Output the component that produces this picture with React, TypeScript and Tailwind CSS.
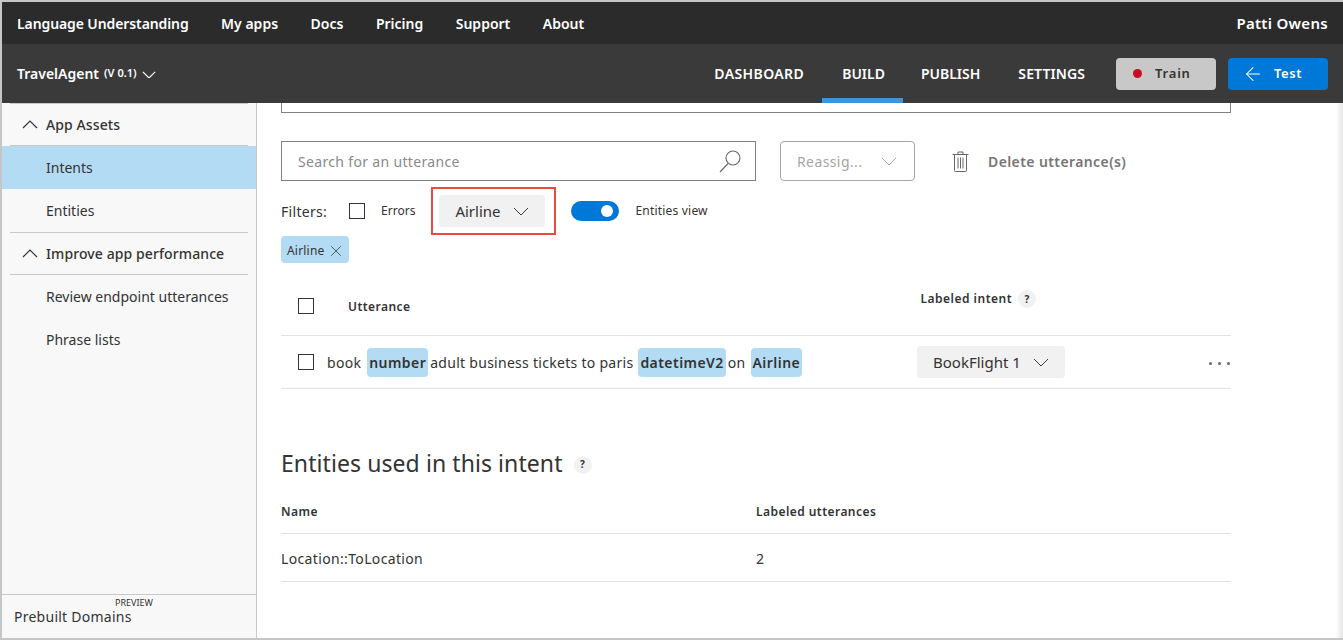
import { ArrowLeft, X } from 'lucide-react';

const topLinks = ['My apps', 'Docs', 'Pricing', 'Support', 'About'];

function Chevron({ className, up, size = 16, weight = 0.95 }: { className?: string; up?: boolean; size?: number; weight?: number }) {
  return (
    <svg width={size} height={(size * 9) / 16} viewBox="0 0 16 9" fill="none" stroke="currentColor" strokeWidth={weight} className={`shrink-0 ${className ?? ''}`}>
      <path d={up ? 'M1 8l7-7 7 7' : 'M1 1l7 7 7-7'} />
    </svg>
  );
}

function SearchIcon() {
  return (
    <svg viewBox="0 0 22 23" fill="none" stroke="#666666" strokeWidth="1.1" className="h-[23px] w-[22px] shrink-0">
      <circle cx="14" cy="8" r="7" />
      <path d="M9 13.5 1 22" />
    </svg>
  );
}

function TrashIcon() {
  return (
    <svg viewBox="0 0 17 21" fill="none" stroke="#666666" strokeWidth="1" className="h-[21px] w-[17px] shrink-0">
      <path d="M0.5 3.5h16M6 3.5V1h5v2.5M2.5 3.5v16.2c0 .5.3.8.8.8h10.4c.5 0 .8-.3.8-.8V3.5" />
      <path d="M6 6.5v11M8.5 6.5v11M11 6.5v11" />
    </svg>
  );
}

function Checkbox() {
  return <span className="block h-4 w-4 shrink-0 border border-[#333333]" />;
}

function Help() {
  return (
    <span className="flex h-[18px] w-[18px] shrink-0 items-center justify-center rounded-full bg-[#f1f1f1] text-[10px] font-bold text-[#333333]">
      ?
    </span>
  );
}

function Entity({ children }: { children: string }) {
  return (
    <span className="flex h-[29px] items-center rounded-sm bg-[#b3dbf3] px-[2px] font-semibold tracking-[0.45px] text-[#333333]">
      {children}
    </span>
  );
}

function SideItem({ label, active }: { label: string; active?: boolean }) {
  return (
    <div className={`flex h-[43px] items-center pl-[44px] text-[14px] ${active ? 'bg-[#b3dbf3]' : ''}`}>
      {label}
    </div>
  );
}

function SideHeader({ label }: { label: string }) {
  return (
    <div className="mx-2 flex h-[43px] items-center border-b border-t border-[#c8c8c8] pl-[12px] text-[14px] font-medium tracking-[0.1px]">
      <Chevron up weight={1.2} className="mr-[8px]" />
      {label}
    </div>
  );
}

export default function App() {
  return (
    <div
      className="flex h-[640px] w-[1343px] flex-col overflow-hidden border-b-2 border-l-2 border-t-2 border-[#c6c6c6] bg-white text-[#333333]"
      style={{ fontFamily: '"Noto Sans", "Open Sans", sans-serif' }}
    >
      {/* top nav */}
      <div className="flex h-[42px] shrink-0 items-center bg-[#2b2b2b] px-[15px] text-[14px] font-semibold text-white">
        <span className="tracking-[-0.1px]">Language Understanding</span>
        {topLinks.map((l) => (
          <span key={l} className="ml-[32.5px]">
            {l}
          </span>
        ))}
        <span className="ml-auto text-[15px] tracking-[0.3px]">Patti Owens</span>
      </div>

      {/* app bar */}
      <div className="flex h-[59px] shrink-0 items-center bg-[#3a3a3a] px-[15px] font-semibold text-white">
        <span className="text-[14px]">TravelAgent</span>
        <span className="ml-[5px] text-[11px]">(V 0.1)</span>
        <Chevron size={14} weight={1.3} className="ml-[5px] mt-[2px]" />
        <div className="ml-auto flex h-full items-center text-[14px]">
          <span className="tracking-[0.4px]">DASHBOARD</span>
          <span className="relative ml-[38px] flex h-full items-center">
            BUILD
            <span className="absolute -left-[20px] -right-[18px] bottom-0 h-[5px] bg-[#3a96dd]" />
          </span>
          <span className="ml-[36px]">PUBLISH</span>
          <span className="ml-[38px] tracking-[0.1px]">SETTINGS</span>
          <button className="ml-[31px] flex h-[32px] w-[100px] items-center rounded-sm bg-[#c8c8c8] pl-[17px] text-[13px] tracking-[0.8px] text-[#333333]">
            <span className="mr-[13px] h-[9px] w-[9px] rounded-full bg-[#c50f1f]" />
            Train
          </button>
          <button className="ml-[12px] flex h-[32px] w-[100px] items-center rounded-sm bg-[#0078d7] pl-[14px] text-[13px] tracking-[0.6px] text-white">
            <ArrowLeft className="mr-[10px] h-[22px] w-[22px]" strokeWidth={1.1} />
            Test
          </button>
        </div>
      </div>

      <div className="flex min-h-0 flex-1">
        {/* sidebar */}
        <aside className="flex w-[255px] shrink-0 flex-col border-r border-[#c8c8c8] bg-[#f8f8f8]">
          <SideHeader label="App Assets" />
          <SideItem label="Intents" active />
          <SideItem label="Entities" />
          <SideHeader label="Improve app performance" />
          <SideItem label="Review endpoint utterances" />
          <SideItem label="Phrase lists" />
          <div className="mt-auto h-[44px] border-t border-[#c8c8c8] pl-3 pt-[3px] text-[14px]">
            <div className="pl-[101px] text-[9px] leading-[10px]">PREVIEW</div>
            <div className="leading-[18px] tracking-[0.25px]">Prebuilt Domains</div>
          </div>
        </aside>

        {/* main */}
        <main className="relative min-w-0 flex-1 pl-[24px]">
          <div className="w-[950px]">
            <div className="h-[10px] border-x border-b border-[#808080]" />

            <div className="mt-[28px] flex h-10 items-center">
              <div className="flex h-10 w-[475px] items-center justify-between border border-[#808080] pl-4 pr-[14px] text-[14px] tracking-[0.33px] text-[#8a8a8a]">
                Search for an utterance
                <SearchIcon />
              </div>
              <div className="ml-[24px] flex h-10 w-[135px] items-center justify-between rounded-sm border border-[#a6a6a6] pl-4 pr-[17px] text-[14px] tracking-[0.4px] text-[#a6a6a6]">
                Reassig...
                <Chevron />
              </div>
              <span className="ml-[37px]"><TrashIcon /></span>
              <span className="ml-[19px] text-[14px] font-semibold tracking-[0.4px] text-[#767676]">Delete utterance(s)</span>
            </div>

            <div className="mt-[6px] flex h-[48px] items-center">
              <span className="text-[14px] tracking-[0.3px]">Filters:</span>
              <span className="ml-[22px]"><Checkbox /></span>
              <span className="ml-4 text-[12px]">Errors</span>
              <div className="ml-4 flex h-[48px] w-[125px] items-center border-2 border-[#e74c3c] pl-[6px]">
                <div className="flex h-8 w-[106px] items-center rounded-sm bg-[#f1f1f1] pl-4 text-[15px]">
                  Airline
                  <Chevron className="ml-[12px]" />
                </div>
              </div>
              <span className="relative ml-[15px] block h-5 w-12 rounded-full bg-[#0078d7]">
                <span className="absolute right-[6px] top-[4px] h-3 w-3 rounded-full bg-white" />
              </span>
              <span className="ml-4 text-[12px] tracking-[0.2px]">Entities view</span>
            </div>

            <div className="mt-[1px] flex h-[27px] w-[68px] items-center rounded-sm bg-[#b3dbf3] pl-[6px] pt-[2px] text-[12px] tracking-[0.2px]">
              Airline
              <X className="ml-[2px] h-[18px] w-[18px] shrink-0" strokeWidth={1} />
            </div>

            <div className="flex h-[73px] border-b border-[#e3e3e3]">
              <div className="ml-[17px] mt-[35px]"><Checkbox /></div>
              <span className="ml-[34px] mt-[35px] text-[12px] font-semibold tracking-[0.45px]">Utterance</span>
              <div className="ml-[510px] mt-[27px] flex h-[18px] items-center gap-[6px] text-[12px] font-semibold tracking-[0.5px]">
                Labeled intent
                <Help />
              </div>
            </div>

            <div className="flex h-[53px] items-center border-b border-[#e3e3e3] text-[14px] tracking-[0.28px]">
              <div className="flex w-[636px] items-center pl-[17px]">
                <Checkbox />
                <span className="ml-[13px]">book</span>
                <span className="ml-[6px]"><Entity>number</Entity></span>
                <span className="ml-[2px]">adult business tickets to paris</span>
                <span className="ml-[5px]"><Entity>datetimeV2</Entity></span>
                <span className="ml-[2px]">on</span>
                <span className="ml-[5px]"><Entity>Airline</Entity></span>
              </div>
              <div className="flex h-8 w-[148px] items-center justify-between rounded-sm bg-[#f1f1f1] pl-4 pr-4 text-[15px] tracking-normal">
                BookFlight 1
                <Chevron />
              </div>
              <div className="ml-auto mr-[1px] mt-[3px] flex gap-[6px]">
                <span className="h-[3px] w-[3px] rounded-full bg-[#666666]" />
                <span className="h-[3px] w-[3px] rounded-full bg-[#666666]" />
                <span className="h-[3px] w-[3px] rounded-full bg-[#666666]" />
              </div>
            </div>

            <div className="mt-[56px] flex h-[36px] items-center gap-[11px] text-[23px] tracking-[0.08px]">
              <span>Entities used in this intent</span>
              <span className="mt-[3px]"><Help /></span>
            </div>

            <div className="mt-[9px] flex h-[44px] items-center border-b border-[#e3e3e3] text-[12px] font-semibold tracking-[0.45px]">
              <span className="w-[475px]">Name</span>
              <span>Labeled utterances</span>
            </div>
            <div className="flex h-[48px] items-center border-b border-[#e3e3e3] pt-[1px] text-[14px] tracking-[0.35px]">
              <span className="w-[475px]">Location::ToLocation</span>
              <span>2</span>
            </div>
          </div>
          <div className="absolute bottom-0 right-0 top-0 w-[7px] bg-gradient-to-r from-white to-[#e4e4e4]" />
        </main>
      </div>
    </div>
  );
}
